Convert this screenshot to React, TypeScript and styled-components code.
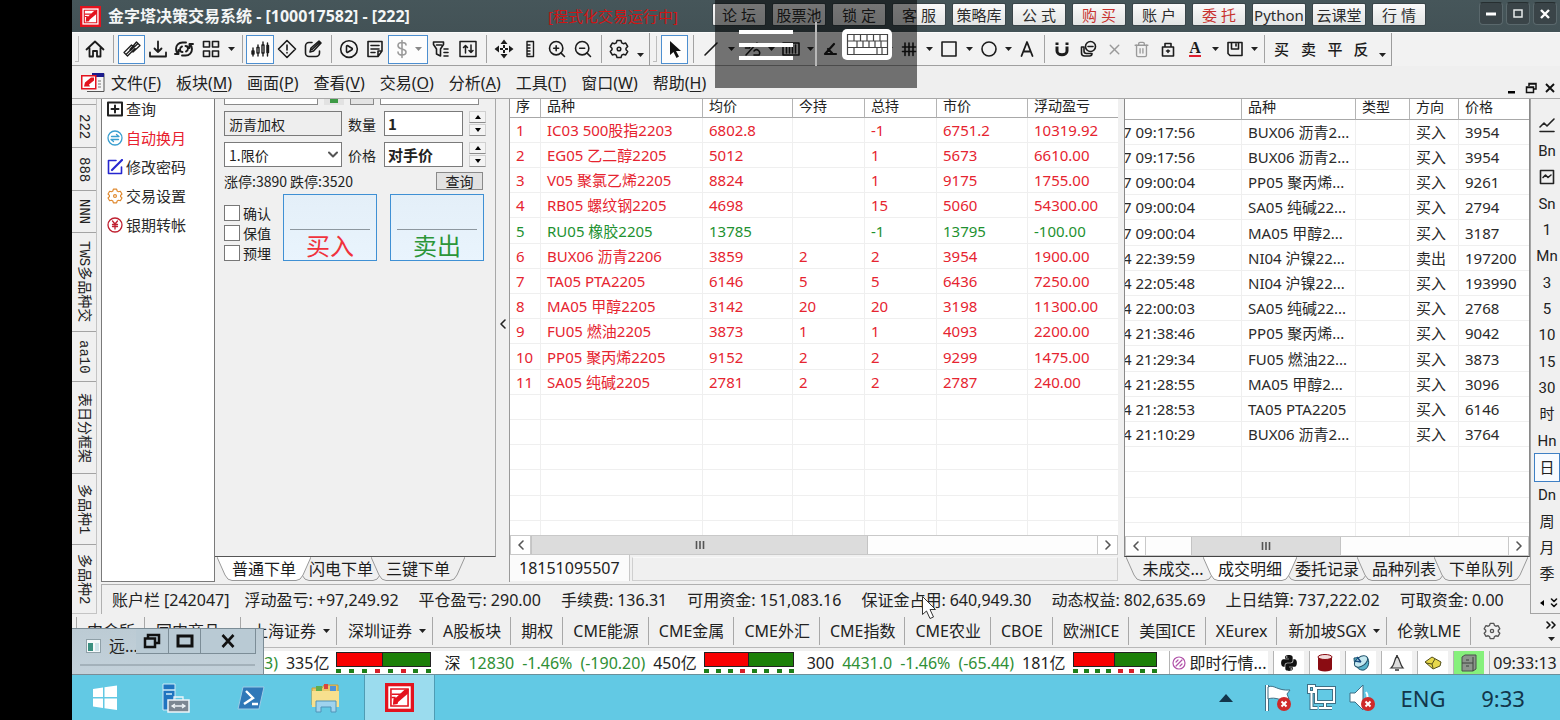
import React from 'react';
import styled, { createGlobalStyle, css } from 'styled-components';
import { CirclePlay, ZoomIn, ZoomOut, Trash2, X } from 'lucide-react';
import { FaPython } from 'react-icons/fa';

const UI_FONT = '"Noto Sans", "Noto Sans CJK SC", sans-serif';
const FORM_FONT = '"Noto Sans CJK SC", sans-serif';

const GlobalStyle = createGlobalStyle`
  * { box-sizing: border-box; }
  html, body { margin: 0; padding: 0; background: #000; }
  body { font-family: ${UI_FONT}; font-size: 16px; line-height: 20px; color: #222; overflow: hidden; }
  button, input, select { font: inherit; color: inherit; margin: 0; padding: 0; border: 0; background: none; border-radius: 0; outline: none; }
  ul { list-style: none; margin: 0; padding: 0; }
  svg { display: block; flex: none; }
`;

/* ---------- shell ---------- */
const Screen = styled.div`
  display: flex;
  height: 100vh;
  background: #000;
`;
const Bezel = styled.div`
  flex: 0 0 72px;
`;
const Desktop = styled.div`
  position: relative;
  flex: 1;
  min-width: 0;
  display: flex;
  flex-direction: column;
  background: #f0f0f0;
  overflow: hidden;
  white-space: nowrap;
`;

/* ---------- title bar ---------- */
const TitleBar = styled.header`
  flex: 0 0 32px;
  display: flex;
  align-items: center;
  padding: 0 3px 0 8px;
  background: linear-gradient(#46565a, #435256);
`;
const Title = styled.h1`
  flex: 0 0 440px;
  margin: 0 0 0 7px;
  font-size: 16px;
  line-height: 20px;
  font-weight: 700;
  color: #f4f6f6;
`;
const Running = styled.span`
  flex: 0 0 165px;
  font-size: 15px;
  color: #d01414;
`;
const TitleLinks = styled.nav`
  display: flex;
  gap: 8px;
  margin-top: -3px;
`;
const TitleLink = styled.button<{ $red?: boolean }>`
  width: 52px;
  height: 21px;
  font-size: 15px;
  line-height: 20px;
  background: linear-gradient(#fafafa, #e2e4e4);
  box-shadow: 0 0 0 1px #394448;
  border-radius: 1px;
  color: ${(p) => (p.$red ? '#c8322e' : '#2c2c2c')};
`;
const WindowButtons = styled.div`
  display: flex;
  gap: 3px;
  margin: -5px 0 0 auto;
`;
const WindowButton = styled.button`
  width: 24px;
  height: 23px;
  display: grid;
  place-items: center;
  background: #3a4448;
  border: 1px solid #5a686c;
  border-top-color: #262e30;
  border-radius: 4px;
`;

/* ---------- toolbars ---------- */
const ToolRow = styled.div`
  flex: 0 0 34px;
  display: flex;
  background: #f2f2f2;
  border-top: 1px solid #fbfbfb;
`;
const ToolGroup = styled.div<{ $lead: number; $tail: number }>`
  display: flex;
  align-items: center;
  padding-right: ${(p) => p.$tail}px;
  border-right: 1px solid #9c9c9c;
  border-bottom: 1px solid #a0a0a0;
  &::before {
    content: '';
    width: 3px;
    height: 25px;
    margin: 0 ${(p) => p.$lead - 6}px 0 3px;
    border: 1px solid #bdbdbd;
    border-width: 0 1px 1px 0;
  }
`;
const Tool = styled.button<{ $w?: number; $on?: boolean; $dim?: boolean }>`
  flex: none;
  width: ${(p) => p.$w ?? 26}px;
  height: 29px;
  display: flex;
  align-items: center;
  justify-content: center;
  gap: 6px;
  font-family: ${FORM_FONT};
  font-weight: 500;
  font-size: 15px;
  line-height: 20px;
  color: ${(p) => (p.$dim ? '#9a9a9a' : '#1c1c1c')};
  ${(p) => p.$on && css`
    && { border: 1px solid #4d8fd0; background: #fdfdfd; }
  `}
`;
const Drop = styled.button<{ $w?: number; $low?: boolean }>`
  flex: none;
  width: ${(p) => p.$w ?? 14}px;
  height: 29px;
  display: flex;
  justify-content: center;
  align-items: center;
  && { padding-top: ${(p) => (p.$low ? 12 : 0)}px; }
`;
const Divider = styled.i<{ $w?: number }>`
  flex: none;
  width: ${(p) => p.$w ?? 10}px;
  height: 28px;
  display: flex;
  justify-content: center;
  &::before { content: ''; width: 1px; background: #a2a2a2; }
`;

const MenuRow = styled.div`
  flex: 0 0 32px;
  display: flex;
  align-items: center;
  gap: 15px;
  padding: 2px 1px 0 9px;
  background: #efefef;
`;
const MenuButton = styled.button`
  line-height: 20px;
  font-size: 16px;
  & u { text-underline-offset: 2px; }
`;
const MdiButtons = styled.div`
  margin-left: auto;
  align-self: flex-end;
  display: flex;
`;
const MdiButton = styled.button`
  width: 19px;
  height: 20px;
  display: grid;
  place-items: center;
`;

/* ---------- work area ---------- */
const WorkArea = styled.main`
  flex: 1;
  min-height: 0;
  display: flex;
  border-top: 1px solid #a8a8a8;
`;
const BoardRail = styled.nav`
  flex: 0 0 25px;
  display: flex;
  flex-direction: column;
  padding-top: 5px;
  border: 1px solid #c4c4c4;
  border-width: 0 1px 1px 0;
`;
const BoardTab = styled.button<{ $grow: number }>`
  flex: ${(p) => p.$grow} 1 0;
  min-height: 0;
  && { border-top: 1px solid #a4a4a4; }
  writing-mode: vertical-rl;
  text-orientation: sideways;
  font-family: "Liberation Mono", "Noto Sans CJK SC", monospace;
  font-size: 14px;
  line-height: 20px;
  text-align: center;
`;
const Centre = styled.div`
  flex: 1;
  min-width: 0;
  display: flex;
  flex-direction: column;
`;
const Workspace = styled.div`
  flex: 1;
  min-height: 0;
  display: flex;
  padding: 0 0 2px 4px;
`;
const SideMenu = styled.ul`
  flex: 0 0 114px;
  && { padding: 0 0 0 5px; }
  background: #fff;
  border: 1px solid #7a7a7a;
  border-top: 0;
  display: flex;
  flex-direction: column;
  gap: 9px;
`;
const SideItem = styled.button<{ $red?: boolean }>`
  display: flex;
  align-items: center;
  gap: 3px;
  height: 20px;
  font-size: 15px;
  line-height: 20px;
  color: ${(p) => (p.$red ? '#e8202e' : '#2a2a2a')};
`;

const OrderPane = styled.section`
  flex: 0 0 281px;
  display: flex;
  flex-direction: column;
`;
const OrderForm = styled.form`
  flex: 1;
  min-height: 0;
  overflow: hidden;
  padding-left: 9px;
  border-right: 1px solid #a8a8a8;
  border-bottom: 1px solid #555;
  font-family: ${FORM_FONT};
  font-size: 14px;
  line-height: 18px;
`;
const FormTop = styled.div`
  display: grid;
  grid-template-columns: 94px 20px 24px 99px;
  column-gap: 6px;
  height: 6px;
  & > * { border: 1px solid #8a8a8a; border-top: 0; background: #fff; }
  & > :nth-child(2) { background: #3d9a45; border: 2px solid #e2e2e2; border-width: 0 6px 2px; }
  & > :nth-child(3) { background: #e4e4e4; }
`;
const FormRow = styled.div`
  display: grid;
  grid-template-columns: 118px 30px 79px 17px;
  column-gap: 6px;
  align-items: center;
  margin-top: 6px;
`;
const Field = styled.input<{ $bold?: boolean }>`
  width: 100%;
  min-width: 0;
  height: 25px;
  && { padding: 0 4px; border: 1px solid #7a7a7a; background: #fff; }
  &&:read-only { background: #eee; }
  ${(p) => p.$bold && css`&& { font-weight: 700; font-size: 15px; padding: 0 3px; }`}
`;
const PriceKind = styled.div`
  position: relative;
  & select {
    width: 100%;
    height: 25px;
    appearance: none;
    padding: 0 4px;
    border: 1px solid #7a7a7a;
    background: #fff;
  }
  & svg { position: absolute; right: 4px; top: 9px; pointer-events: none; }
`;
const Spinner = styled.div`
  display: grid;
  gap: 1px;
  & button {
    height: 12px;
    display: grid;
    place-items: center;
    border: 1px solid #d0d0d0;
    border-bottom-color: #8c8c8c;
    background: #f4f4f4;
  }
`;
const LimitRow = styled.div`
  display: flex;
  align-items: center;
  justify-content: space-between;
  width: 259px;
  margin-top: 5px;
  & button {
    width: 47px;
    height: 18px;
    line-height: 16px;
    border: 1px solid #8a8a8a;
    background: #e2e2e2;
  }
`;
const TradeRow = styled.div`
  display: grid;
  grid-template-columns: 46px 94px 94px;
  column-gap: 13px;
  margin-top: 4px;
`;
const Checks = styled.div`
  display: grid;
  gap: 2px;
  padding-top: 10px;
  & label { display: flex; align-items: center; gap: 3px; height: 18px; }
  & input {
    flex: none;
    appearance: none;
    width: 16px;
    height: 16px;
    border: 1px solid #777;
    background: #fff;
  }
`;
const TradeButton = styled.button<{ $tone: string }>`
  && { padding: 0 6px; border: 1px solid #3f90d4; background: linear-gradient(#e4eff8, #e9f4fd); }
  height: 67px;
  font-size: 24px;
  line-height: 30px;
  color: ${(p) => p.$tone};
  &::before {
    content: '';
    display: block;
    height: 33px;
    border-bottom: 1px solid #8d979f;
  }
`;

const SheetTabs = styled.div`
  flex: 0 0 25px;
  display: flex;
  align-items: flex-start;
  padding-left: 2px;
`;
const SheetTab = styled.button<{ $on?: boolean }>`
  position: relative;
  z-index: ${(p) => (p.$on ? 1 : 0)};
  display: flex;
  height: 24px;
  && { margin-right: -17px; }
  color: #1c1c1c;
  & span {
    min-width: 64px;
    height: 24px;
    line-height: 24px;
    border-bottom: 1px solid #999;
    background: ${(p) => (p.$on ? '#fff' : '#f0f0f0')};
  }
  & path:first-child { fill: ${(p) => (p.$on ? '#fff' : '#f0f0f0')}; }
`;

const Splitter = styled.button`
  flex: 0 0 14px;
  display: grid;
  place-items: center;
  && { padding-bottom: 34px; border-right: 1px solid #9a9a9a; }
`;
const ListPane = styled.section<{ $share: number }>`
  flex: ${(p) => p.$share} 1 0;
  min-width: 0;
  display: flex;
  flex-direction: column;
`;
const ListBody = styled.div<{ $framed?: boolean }>`
  flex: 1;
  min-height: 0;
  display: flex;
  flex-direction: column;
  background: #fff;
  ${(p) => p.$framed && css`
    border: 1px solid #8a8a8a;
    border-top: 0;
    border-bottom-color: #444;
  `}
`;
const TableClip = styled.div`
  flex: 1;
  min-height: 0;
  overflow: hidden;
`;
const Table = styled.table<{ $head: number }>`
  width: 100%;
  table-layout: fixed;
  border-collapse: separate;
  border-spacing: 0;
  font-size: 15px;
  & th {
    height: ${(p) => p.$head}px;
    padding: 0 0 4px 6px;
    font-size: 14px;
    font-weight: 400;
    line-height: ${(p) => p.$head - 5}px;
    text-align: left;
    border-right: 1px solid #b4b4b4;
    border-bottom: 1px solid #a8a8a8;
  }
  & td {
    height: 25px;
    padding: 0 0 0 6px;
    line-height: 20px;
    overflow: hidden;
    border-right: 1px solid #efefef;
    border-bottom: 1px solid #efefef;
  }
  & tr:nth-child(5n) td { height: 26px; }
  & th:last-child, & td:last-child { border-right: 0; }
`;
const Row = styled.tr<{ $tone: string }>`
  color: ${(p) => p.$tone};
`;
const ScrollBar = styled.div`
  flex: 0 0 20px;
  display: flex;
  border: 1px solid #c9c9c9;
  background: #fdfdfd;
  color: #555;
  & > button {
    flex: 0 0 20px;
    display: grid;
    place-items: center;
    background: #fff;
    border: 0 solid #c9c9c9;
  }
  & > button:first-child { border-right-width: 1px; }
  & > button:last-child { border-left-width: 1px; }
`;
const Track = styled.div<{ $before: number; $thumb: number; $after: number }>`
  flex: 1;
  display: grid;
  grid-template-columns: ${(p) => p.$before}fr ${(p) => p.$thumb}fr ${(p) => p.$after}fr;
  & > div {
    grid-column: 2;
    display: grid;
    place-items: center;
    background: #dcdcdc;
    border: 1px solid #c4c4c4;
    border-width: 0 1px;
  }
`;
const AccountTabs = styled.div`
  flex: 0 0 27px;
  display: flex;
  gap: 2px;
  padding-bottom: 1px;
  & button { background: #fbfbfb; padding: 0 9px; border-right: 1px solid #c8c8c8; }
  & div { flex: 1; margin-top: 2px; border: 1px solid #cfcfcf; border-top-color: #f8f8f8; }
`;
const Gutter = styled.div`
  flex: 0 0 6px;
`;

const AccountBar = styled.dl`
  flex: 0 0 30px;
  display: flex;
  align-items: center;
  gap: 20px;
  margin: 0 0 0 4px;
  padding: 0 0 0 10px;
  border: 1px solid #b0b0b0;
  border-width: 1px 0 0 1px;
  overflow: hidden;
  & div { display: flex; gap: 4px; }
  & div:first-child { margin-right: -5px; }
  & dt, & dd { margin: 0; }
`;

const PeriodRail = styled.nav`
  flex: 0 0 30px;
  display: flex;
  flex-direction: column;
  padding: 12px 0 0 3px;
  border: 1px solid #a4a4a4;
  border-width: 0 0 1px 1px;
`;
const PeriodButton = styled.button<{ $on?: boolean }>`
  flex: 1;
  min-height: 0;
  display: grid;
  place-items: center;
  font-family: "Roboto", "Noto Sans CJK SC", sans-serif;
  font-size: 15px;
  line-height: 18px;
  && { padding-top: 1px; }
  ${(p) => p.$on && css`
    && { border: 1px solid #3f80c4; background: #f8fbff; }
  `}
`;
const RailMore = styled.div`
  flex: 0 0 26px;
  display: flex;
  align-items: center;
  justify-content: flex-end;
  gap: 6px;
  padding: 6px 2px 0 0;
`;

/* ---------- markets ---------- */
const MarketRow = styled.nav`
  flex: 0 0 34px;
  display: flex;
  padding: 3px 4px 2px;
  border-bottom: 1px solid #b8b8b8;
`;
const Market = styled.button<{ $menu?: boolean }>`
  flex: none;
  display: flex;
  align-items: center;
  gap: 7px;
  && {
    padding: ${(p) => (p.$menu ? '0 6px 0 11px' : '0 9px 0 10px')};
    border-left: 1px solid #a8a8a8;
  }
`;
const MarketMore = styled.div`
  display: grid;
  align-content: space-around;
  justify-items: center;
  margin-left: auto;
`;

/* ---------- status bar ---------- */
const StatusRow = styled.footer`
  flex: 0 0 27px;
  display: flex;
  align-items: center;
  gap: 7px;
  padding-left: 192px;
  background: #fff;
  border-top: 3px solid #f0f0f0;
  border-bottom: 1px solid #6b8f9a;
`;
const Quote = styled.div`
  flex: none;
  display: flex;
  gap: 8px;
  &:not(:first-child) { margin-left: 6px; }
  & b { font-weight: 400; color: #2f8f35; }
`;
const Strength = styled.div<{ $w: number }>`
  flex: none;
  width: ${(p) => p.$w}px;
  & > div {
    display: flex;
    height: 15px;
    background: #1c8008;
    border: 1px solid #222;
  }
  & > div i { background: #f80000; border-right: 1px solid #222; }
`;
const Dots = styled.ul`
  display: flex;
  justify-content: space-between;
  && { margin-top: 2px; }
`;
const Dot = styled.li<{ $up: boolean }>`
  width: 5px;
  height: 4px;
  background: ${(p) => (p.$up ? '#d8202a' : '#1f7f1a')};
`;
const StatusTray = styled.div`
  margin-left: auto;
  display: flex;
  align-self: stretch;
  background: #f0f0f0;
  gap: 5px;
`;
const TrayCell = styled.button<{ $w: number; $bg?: string }>`
  width: ${(p) => p.$w}px;
  display: flex;
  align-items: center;
  justify-content: center;
  gap: 4px;
  && { background: ${(p) => p.$bg ?? '#fff'}; border-left: 1px solid #b4b4b4; }
`;

/* ---------- Windows taskbar ---------- */
const TaskBar = styled.footer`
  flex: 0 0 45px;
  display: flex;
  align-items: center;
  background: #62c9e4;
  color: #12354b;
`;
const Task = styled.button<{ $w: number; $on?: boolean }>`
  width: ${(p) => p.$w}px;
  height: 45px;
  display: grid;
  place-items: center;
  ${(p) => p.$on && css`
    && { background: #9bdcee; border: 1px solid #4f9cb4; border-width: 0 1px; }
  `}
`;
const Tray = styled.div`
  margin-left: auto;
  display: flex;
  align-items: center;
  padding-right: 14px;
  font-size: 22px;
  line-height: 28px;
`;
const TrayText = styled.span<{ $w: number }>`
  width: ${(p) => p.$w}px;
  text-align: center;
`;
const TrayIcons = styled.span`
  display: flex;
  gap: 12px;
  padding: 0 8px 0 31px;
`;

/* ---------- floating layers ---------- */
const PhoneOverlay = styled.div`
  position: absolute;
  z-index: 5;
  top: 0;
  left: 50%;
  width: 202px;
  height: 88px;
  margin-left: -101px;
  display: flex;
  background: rgba(0, 0, 0, 0.53);
`;
const OverlayHalf = styled.button`
  flex: 1;
  display: grid;
  place-items: center;
  &:first-child::after {
    content: '';
    position: absolute;
    left: 100px;
    top: 22px;
    width: 2px;
    height: 44px;
    background: #b8b8b8;
  }
`;
const Burger = styled.span`
  width: 54px;
  display: grid;
  gap: 9px;
  padding-top: 2px;
  & i { height: 4px; background: #fff; }
`;
const MiniWindow = styled.div`
  position: absolute;
  z-index: 4;
  left: 0;
  bottom: 45px;
  width: 192px;
  height: 47px;
  display: flex;
  align-items: flex-start;
  padding: 0 7px 0 14px;
  background: linear-gradient(#bccbd4, #c3d1da);
  border: 1px solid #7b8c96;
  border-left: 0;
  &::after {
    content: '';
    position: absolute;
    left: 8px;
    right: 8px;
    bottom: 8px;
    height: 2px;
    background: #a3b1ba;
  }
`;
const MiniIcon = styled.span`
  margin-top: 10px;
`;
const MiniTitle = styled.span`
  width: 28px;
  margin: 7px 0 0 8px;
  overflow: hidden;
`;
const MiniButton = styled.button<{ $w: number }>`
  flex: none;
  width: ${(p) => p.$w}px;
  height: 25px;
  display: grid;
  place-items: center;
  && { background: #b9cad4; border: 1px solid #7c8d97; border-top: 0; border-left-width: 0; }
`;
const Pointer = styled.svg`
  position: absolute;
  z-index: 4;
  left: 849px;
  top: 595px;
`;
const MenuMark = styled.span`
  width: 24px;
  margin-right: -9px;
`;
const MarketGear = styled.span`
  padding-left: 2px;
  color: #555;
`;
const FontColour = styled.span`
  width: 12px;
  height: 16px;
  font: 700 16px/14px "Liberation Serif", serif;
  border-bottom: 2px solid #e02030;
`;

/* ---------- drawings ---------- */
type P = { children: React.ReactNode; w?: number; h?: number; sw?: number };
const G = ({ children, w = 20, h = 20, sw = 1.6 }: P) => (
  <svg width={w} height={h} viewBox={`0 0 ${w} ${h}`} fill="none" stroke="currentColor" strokeWidth={sw} strokeLinejoin="round" strokeLinecap="round">
    {children}
  </svg>
);
const Caret = ({ c = '#222' }: { c?: string }) => (
  <svg width="7" height="4" viewBox="0 0 7 4"><path d="M0 0h7L3.5 4z" fill={c} /></svg>
);
const Chevron = ({ right }: { right?: boolean }) => (
  <G w={8} h={12} sw={1.6}><path d={right ? 'M2 2l4 4-4 4' : 'M6 2L2 6l4 4'} /></G>
);
const Logo = ({ size }: { size: number }) => (
  <svg width={size} height={size} viewBox="0 0 22 22">
    <rect width="22" height="22" fill="#e3131e" />
    <rect x="2.500" y="2.500" width="17" height="17" fill="#fff" />
    <path d="M4.500 4.500h13v13h-13z" fill="none" stroke="#e3131e" strokeWidth="1.200" />
    <path d="M6 16.500l.5-5 2-.5L15 5l3-.5-.5 3.500-7.500 6.500-.5 1.500z" fill="#e3131e" />
    <path d="M5 8.500h7M5 11h3" stroke="#e3131e" strokeWidth="1.200" />
  </svg>
);
const EdgeL = () => (
  <svg width="15" height="24" viewBox="0 0 15 24">
    <path d="M0 0L8 18Q10.500 23.500 15 23.500V0z" />
    <path d="M0 0L8 18Q10.500 23.500 15 23.500" fill="none" stroke="#999" />
  </svg>
);
const EdgeR = () => (
  <svg width="15" height="24" viewBox="0 0 15 24">
    <path d="M15 0L7 18Q4.500 23.500 0 23.500V0z" />
    <path d="M15 0L7 18Q4.500 23.500 0 23.500" fill="none" stroke="#999" />
  </svg>
);
const Gear = ({ size = 20, c = 'currentColor' }: { size?: number; c?: string }) => (
  <svg width={size} height={size} viewBox="0 0 20 20" fill="none" stroke={c} strokeWidth="1.500" strokeLinejoin="round">
    <path d="M8 1.500h4l.7 2.300 1.600.9 2.400-.6 2 3.400L17 9.200v1.600l1.700 1.700-2 3.400-2.400-.6-1.600.9-.7 2.300H8l-.7-2.300-1.600-.9-2.400.6-2-3.400L3 10.800V9.200L1.300 7.500l2-3.400 2.400.6 1.600-.9z" />
    <circle cx="10" cy="10" r="1.800" />
  </svg>
);
const ErrorBadge = () => (
  <g>
    <circle cx="20" cy="21" r="7" fill="#cf2a2a" />
    <path d="M17.500 18.500l5 5m0-5l-5 5" stroke="#fff" strokeWidth="2" />
  </g>
);

/* ---------- data ---------- */
const titleLinks: [string, boolean?][] = [
  ['论 坛'], ['股票池'], ['锁 定'], ['客 服'], ['策略库'], ['公 式'], ['购 买', true],
  ['账 户'], ['委 托', true], ['Python'], ['云课堂'], ['行 情'],
];
const menus = [
  ['文件', 'F'], ['板块', 'M'], ['画面', 'P'], ['查看', 'V'], ['交易', 'O'],
  ['分析', 'A'], ['工具', 'T'], ['窗口', 'W'], ['帮助', 'H'],
];
const boards: [string, number][] = [
  ['222', 43], ['888', 42], ['NNN', 42], ['TWS多品种交', 99], ['aa10', 50],
  ['表日分框架', 92], ['多品种1', 71], ['多品种2', 69],
];
const positions = [
  ['1', 'IC03 500股指2203', '6802.8', '', '-1', '6751.2', '10319.92'],
  ['2', 'EG05 乙二醇2205', '5012', '', '1', '5673', '6610.00'],
  ['3', 'V05 聚氯乙烯2205', '8824', '', '1', '9175', '1755.00'],
  ['4', 'RB05 螺纹钢2205', '4698', '', '15', '5060', '54300.00'],
  ['5', 'RU05 橡胶2205', '13785', '', '-1', '13795', '-100.00'],
  ['6', 'BUX06 沥青2206', '3859', '2', '2', '3954', '1900.00'],
  ['7', 'TA05 PTA2205', '6146', '5', '5', '6436', '7250.00'],
  ['8', 'MA05 甲醇2205', '3142', '20', '20', '3198', '11300.00'],
  ['9', 'FU05 燃油2205', '3873', '1', '1', '4093', '2200.00'],
  ['10', 'PP05 聚丙烯2205', '9152', '2', '2', '9299', '1475.00'],
  ['11', 'SA05 纯碱2205', '2781', '2', '2', '2787', '240.00'],
];
const fills = [
  ['7 09:17:56', 'BUX06 沥青2...', '', '买入', '3954'],
  ['7 09:17:56', 'BUX06 沥青2...', '', '买入', '3954'],
  ['7 09:00:04', 'PP05 聚丙烯...', '', '买入', '9261'],
  ['7 09:00:04', 'SA05 纯碱22...', '', '买入', '2794'],
  ['7 09:00:04', 'MA05 甲醇2...', '', '买入', '3187'],
  ['4 22:39:59', 'NI04 沪镍22...', '', '卖出', '197200'],
  ['4 22:05:48', 'NI04 沪镍22...', '', '买入', '193990'],
  ['4 22:00:03', 'SA05 纯碱22...', '', '买入', '2768'],
  ['4 21:38:46', 'PP05 聚丙烯...', '', '买入', '9042'],
  ['4 21:29:34', 'FU05 燃油22...', '', '买入', '3873'],
  ['4 21:28:55', 'MA05 甲醇2...', '', '买入', '3096'],
  ['4 21:28:53', 'TA05 PTA2205', '', '买入', '6146'],
  ['4 21:10:29', 'BUX06 沥青2...', '', '买入', '3764'],
];
const account = [
  ['浮动盈亏:', '+97,249.92'], ['平仓盈亏:', '290.00'], ['手续费:', '136.31'],
  ['可用资金:', '151,083.16'], ['保证金占用:', '640,949.30'], ['动态权益:', '802,635.69'],
  ['上日结算:', '737,222.02'], ['可取资金:', '0.00'],
];
const markets: [string, boolean?][] = [
  ['中金所'], ['国内商品', true], ['上海证券', true], ['深圳证券', true], ['A股板块'], ['期权'],
  ['CME能源'], ['CME金属'], ['CME外汇'], ['CME指数'], ['CME农业'], ['CBOE'], ['欧洲ICE'],
  ['美国ICE'], ['XEurex'], ['新加坡SGX', true], ['伦敦LME'],
];
const ROWS_SHOWN = 17;

const FlushCell = styled.td`
  text-indent: -2px;
  && { padding-left: 0; }
`;
const Grid = ({ heads, widths, rows, headHeight, tone, flushFirst }: {
  heads: string[]; widths: (number | undefined)[]; rows: string[][]; headHeight: number;
  tone: (r: string[]) => string; flushFirst?: boolean;
}) => (
  <Table $head={headHeight}>
    <colgroup>{widths.map((w, i) => <col key={i} width={w} />)}</colgroup>
    <thead><tr>{heads.map((h, i) => <th key={i}>{h}</th>)}</tr></thead>
    <tbody>
      {Array.from({ length: ROWS_SHOWN }, (_, r) => rows[r] ?? heads.map(() => '')).map((r, i) => (
        <Row key={i} $tone={tone(r)}>
          {r.map((c, j) => (flushFirst && j === 0 ? <FlushCell key={j}>{c}</FlushCell> : <td key={j}>{c}</td>))}
        </Row>
      ))}
    </tbody>
  </Table>
);

const Scroll = (p: { before: number; thumb: number; after: number }) => (
  <ScrollBar>
    <button aria-label="向左滚动"><Chevron /></button>
    <Track $before={p.before} $thumb={p.thumb} $after={p.after}>
      <div><G w={10} h={8}><path d="M1.500 0v8M5 0v8M8.500 0v8" /></G></div>
    </Track>
    <button aria-label="向右滚动"><Chevron right /></button>
  </ScrollBar>
);

const Sheets = ({ names, active }: { names: string[]; active: number }) => (
  <SheetTabs>
    {names.map((n, i) => (
      <SheetTab key={n} $on={i === active}><EdgeL /><span>{n}</span><EdgeR /></SheetTab>
    ))}
  </SheetTabs>
);

const StrengthBar = ({ w, up, dots }: { w: number; up: number; dots: string }) => (
  <Strength $w={w}>
    <div><i style={{ width: `${up}%` }} /></div>
    <Dots>{dots.split('').map((d, i) => <Dot key={i} $up={d === 'r'} />)}</Dots>
  </Strength>
);

const Spin = () => (
  <Spinner>
    <button type="button" aria-label="增加"><svg width="6" height="4" viewBox="0 0 6 4"><path d="M0 4h6L3 0z" /></svg></button>
    <button type="button" aria-label="减少"><svg width="6" height="4" viewBox="0 0 6 4"><path d="M0 0h6L3 4z" /></svg></button>
  </Spinner>
);

const MainTools = () => (
  <ToolGroup $lead={9} $tail={1}>
    <Tool aria-label="首页"><G sw={1.8}><path d="M1.500 10.500L10 2.500l8.500 8M4.500 9v8.500h3.500V12h4v5.500h3.500V9" /></G></Tool>
    <Divider />
    <Tool $w={27} $on aria-label="连接">
      <G sw={1.3}><path d="M2 13.500L9.500 6l3.500 3.500L5.500 17zM8 10.500L14.500 3 18 6.500 11 13M4.500 15l8-8M8.500 11.500l7.500-7" /></G>
    </Tool>
    <Tool aria-label="下载"><G sw={1.8}><path d="M10 2.500v10.500M6.500 9.500L10 13l3.500-3.500M2 13.500v4h16v-4" /></G></Tool>
    <Tool aria-label="刷新">
      <G sw={1.9}><path d="M8.500 3.500C4.500 3.500 2 6.500 2 10c0 2 .8 3.500 2 4.500M4.500 11v4H1M8 7.500c-1.500.5-2 1.500-2 3s1 2.500 2.500 2.500M11.500 16.500c4 0 6.500-3 6.500-6.500 0-2-.8-3.500-2-4.500M15.500 9V5H19M12 12.500c1.500-.5 2-1.500 2-3S13 7 11.500 7M8 3.500h4M8 16.500h4" /></G>
    </Tool>
    <Tool $w={27} aria-label="布局"><G><path d="M2.500 2.500h6V8h-6zM11.500 2.500h6V8h-6zM2.500 12h6v5.500h-6zM11.500 12h6v5.500h-6z" /></G></Tool>
    <Drop aria-label="布局选项"><Caret /></Drop>
    <Divider $w={8} />
    <Tool $w={28} $on aria-label="K线">
      <G w={20} sw={1.4}><path d="M3 9v8M8 6v11M13 3v14M17.500 4v13" /><path d="M2 12h2v3H2zM17 6.500h1.500v7H17z" fill="currentColor" /><path d="M7 8.500h2V14H7zM12 6h2v8h-2z" fill="#fff" /></G>
    </Tool>
    <Tool aria-label="预警"><G><path d="M10 1.500L18.500 10 10 18.500 1.500 10zM10 6v5M10 13.500v.5" /></G></Tool>
    <Tool aria-label="编辑"><G><path d="M9 3.500H6A3.500 3.500 0 0 0 2.500 7v7A3.500 3.500 0 0 0 6 17.500h7a3.500 3.500 0 0 0 3.500-3.500v-2M7 13l1-4 8-7 2 2-7.500 8zM9 10.500L16.500 3.500" /></G></Tool>
    <Divider />
    <Tool aria-label="运行"><CirclePlay size={20} strokeWidth={1.9} /></Tool>
    <Tool aria-label="公告"><G><path d="M3 2.500h14V12l-4 5.500H3zM6 6.500h8M6 10h8M17 12h-4v5M6 13.500h4" /></G></Tool>
    <Tool $w={40} $on $dim aria-label="资金">
      <G w={14}><path d="M11 6c0-2-2-2.500-4-2.500S3 4.500 3 6.500 5 9.500 7 10s4 1 4 3-2 3-4 3-4-1-4-3M7 1.500v17" /></G>
      <Caret c="#888" />
    </Tool>
    <Tool aria-label="筛选"><G><path d="M2.500 3h10v2.500L9.500 10v7l-4-2v-5l-3-4.500zM5.500 6h5M13 10h4M13 13.500h4M13 17h4" /></G></Tool>
    <Tool $w={27} aria-label="排序"><G sw={1.5}><path d="M2 2.500h16v15H2zM7.500 14V6.500M5.500 8.500l2-2 2 2M13 6v7.500M11 11.500l2 2 2-2" /></G></Tool>
    <Divider />
    <Tool aria-label="移动"><G><path d="M10 .5l3.500 4.500h-7zM10 19.500l3.500-4.500h-7zM.5 10L5 6.500v7zM19.500 10L15 6.500v7zM9 6h2v3H9zM9 11h2v3H9zM6 9h3v2H6zM11 9h3v2h-3z" fill="currentColor" stroke="none" /></G></Tool>
    <Tool aria-label="标尺"><G sw={1.4}><path d="M7 2.500h6.500v15H7zM7 6h3M7 9h3M7 12h3M7 15h3" /></G></Tool>
    <Tool $w={27} aria-label="放大"><ZoomIn size={20} strokeWidth={1.9} /></Tool>
    <Tool aria-label="缩小"><ZoomOut size={20} strokeWidth={1.9} /></Tool>
    <Divider />
    <Tool aria-label="设置"><Gear /></Tool>
    <Drop $w={16} $low aria-label="更多"><Caret /></Drop>
  </ToolGroup>
);

const DrawTools = () => (
  <ToolGroup $lead={10} $tail={1}>
    <Tool $w={27} $on aria-label="选择"><svg width="16" height="20" viewBox="0 0 16 20"><path d="M3 2v14l3.500-3 3 6 2.500-1.500-3-5.500h5z" fill="#111" /></svg></Tool>
    <Divider />
    <Tool aria-label="直线"><G><path d="M4 16L16 4" /></G></Tool>
    <Drop aria-label="直线选项"><Caret /></Drop>
    <Tool $w={27} aria-label="百分比"><G><path d="M4 16L15 4M3 5h5M12 16h5a2.500 2.500 0 0 0-5-4M3.500 9h4a2 2 0 0 0-1-3" /></G></Tool>
    <Drop $w={12} aria-label="百分比选项"><Caret /></Drop>
    <Tool $w={27} aria-label="周期线"><G><path d="M2 4h16v12H2zM5.500 6v8M8.500 6v8M11.500 6v8M14.500 6v8" /></G></Tool>
    <Drop $w={13} aria-label="周期线选项"><Caret /></Drop>
    <Tool aria-label="角度"><G sw={2.2}><path d="M14 5L5 15h11M8 10l4 4" /></G></Tool>
    <Tool $w={40} aria-label="标注" />
    <Drop $w={13} aria-label="标注选项"><Caret /></Drop>
    <Tool aria-label="网格"><G><path d="M6 4v12.500M10 4v12.500M14 4v12.500M3.500 8h13M3.500 12.500h13" /></G></Tool>
    <Drop aria-label="网格选项"><Caret /></Drop>
    <Tool aria-label="矩形"><G><path d="M3 3h14v14H3z" /></G></Tool>
    <Drop aria-label="矩形选项"><Caret /></Drop>
    <Tool aria-label="圆形"><G><circle cx="10" cy="10" r="7" /></G></Tool>
    <Drop $w={12} aria-label="圆形选项"><Caret /></Drop>
    <Tool aria-label="文字"><G sw={1.8}><path d="M4.500 17L10 3l5.500 14M6.500 12.500h7" /></G></Tool>
    <Divider $w={9} />
    <Tool aria-label="磁吸"><G sw={3}><path d="M5 7.500V12c0 5 10 5 10 0V7.500M5 3.500V6M15 3.500V6" strokeLinecap="butt" /></G></Tool>
    <Tool aria-label="复制"><G><circle cx="12.500" cy="7.500" r="5" /><path d="M6 8H3.500v6a3 3 0 0 0 3 3h5c1.500 0 2.500-1 2.500-2.500M10 7.500h5M6 8v4c0 1.500 1 2.500 2.500 2.500H14" /></G></Tool>
    <Tool $dim aria-label="删除"><X size={17} strokeWidth={2} /></Tool>
    <Tool $w={28} $dim aria-label="清空"><Trash2 size={17} strokeWidth={1.9} /></Tool>
    <Tool aria-label="锁定"><G><path d="M4.500 8h11v9h-11zM7 8V4.500h6V8M10 11v2.500M8.500 12h3" /></G></Tool>
    <Tool $w={28} aria-label="文字颜色"><FontColour>A</FontColour></Tool>
    <Drop $w={13} aria-label="颜色选项"><Caret /></Drop>
    <Tool aria-label="保存"><G><path d="M3 3.500h14v13H5L3 14.500zM6.500 3.500V10h7V3.500M11 5v2" /></G></Tool>
    <Drop $w={12} aria-label="保存选项"><Caret /></Drop>
    <Divider $w={8} />
    <Tool $w={27}>买</Tool>
    <Tool $w={27}>卖</Tool>
    <Tool>平</Tool>
    <Tool>反</Tool>
    <Drop $w={16} $low aria-label="更多"><Caret /></Drop>
  </ToolGroup>
);

export default function App() {
  return (
    <>
      <GlobalStyle />
      <Screen>
        <Bezel />
        <Desktop>
          <TitleBar>
            <Logo size={21} />
            <Title>金字塔决策交易系统 - [100017582] - [222]</Title>
            <Running>[程式化交易运行中]</Running>
            <TitleLinks>
              {titleLinks.map(([t, red]) => <TitleLink key={t} $red={red}>{t}</TitleLink>)}
            </TitleLinks>
            <WindowButtons>
              <WindowButton aria-label="最小化"><svg width="12" height="12"><path d="M1 4.500h10v3H1z" fill="#fff" /></svg></WindowButton>
              <WindowButton aria-label="最大化"><svg width="12" height="12"><path d="M2 2h8v7H2z" fill="none" stroke="#e8eaea" strokeWidth="1.500" /></svg></WindowButton>
              <WindowButton aria-label="关闭"><svg width="12" height="12"><path d="M2 2l8 8m0-8l-8 8" stroke="#fff" strokeWidth="2.400" /></svg></WindowButton>
            </WindowButtons>
          </TitleBar>

          <ToolRow>
            <MainTools />
            <DrawTools />
          </ToolRow>

          <MenuRow>
            <MenuMark>
              <svg width="24" height="20" viewBox="0 0 24 20">
                <path d="M11 .5h12v18H6" fill="#f4f4f4" stroke="#555" />
                <path d="M11 0h12v4H11z" fill="#1c1c8c" />
                <path d="M17 8h3M17 11h3M17 14h3" stroke="#777" />
                <rect x=".75" y="2.750" width="14" height="13" fill="#fff" stroke="#e3131e" strokeWidth="1.500" />
                <path d="M3 13.500l1-4 6-5h3v3l-5 4 1 2z" fill="#e3131e" />
              </svg>
            </MenuMark>
            {menus.map(([t, k]) => <MenuButton key={k}>{t}(<u>{k}</u>)</MenuButton>)}
            <MdiButtons>
              <MdiButton aria-label="最小化子窗口"><svg width="12" height="12"><path d="M2 9h7v2.500H2z" /></svg></MdiButton>
              <MdiButton aria-label="还原子窗口"><svg width="12" height="12"><path d="M4 4V1.500h7V7H8.500M1.500 5h7v5.500h-7zM4 2h7M1.500 5.500h7" fill="none" stroke="#111" strokeWidth="1.500" /></svg></MdiButton>
              <MdiButton aria-label="关闭子窗口"><svg width="12" height="12"><path d="M2 2l8 8m0-8l-8 8" stroke="#111" strokeWidth="1.900" /></svg></MdiButton>
            </MdiButtons>
          </MenuRow>

          <WorkArea>
            <BoardRail>
              {boards.map(([t, g]) => <BoardTab key={t} $grow={g}>{t}</BoardTab>)}
            </BoardRail>

            <Centre>
              <Workspace>
                <SideMenu>
                  <li><SideItem><G w={16} h={16}><path d="M1 1.500h14v13H1zM8 4.500v7M4.500 8h7" stroke="#222" strokeWidth="2" /></G>查询</SideItem></li>
                  <li><SideItem $red><G w={16} h={16} sw={1.3}><g stroke="#3a9fd0"><circle cx="8" cy="8" r="7" /><path d="M4.500 6.500H12L9.500 4.500M11.500 9.500H4L6.500 11.500" /></g></G>自动换月</SideItem></li>
                  <li><SideItem><G w={16} h={16}><g stroke="#2626d0"><path d="M9 1.500H1.500v13h13V8" /><path d="M5 11L15 1" strokeWidth="2.200" /></g></G>修改密码</SideItem></li>
                  <li><SideItem><Gear size={16} c="#e08a30" />交易设置</SideItem></li>
                  <li><SideItem><G w={16} h={16} sw={1.3}><g stroke="#c02030"><circle cx="8" cy="8" r="7" /><path d="M5.500 4L8 7 10.500 4M8 7v5M5.500 7.500h5M5.500 9.500h5" /></g></G>银期转帐</SideItem></li>
                </SideMenu>

                <OrderPane>
                  <OrderForm onSubmit={(e) => e.preventDefault()}>
                    <FormTop><i /><i /><i /><i /></FormTop>
                    <FormRow>
                      <Field aria-label="合约" readOnly value="沥青加权" />
                      <label htmlFor="qty">数量</label>
                      <Field id="qty" $bold defaultValue="1" />
                      <Spin />
                    </FormRow>
                    <FormRow>
                      <PriceKind>
                        <select aria-label="价格类型" defaultValue="limit"><option value="limit">1.限价</option></select>
                        <G w={10} h={8} sw={2}><path d="M1 1.500l4 4 4-4" stroke="#555" /></G>
                      </PriceKind>
                      <label htmlFor="price">价格</label>
                      <Field id="price" $bold defaultValue="对手价" />
                      <Spin />
                    </FormRow>
                    <LimitRow><span>涨停:3890 跌停:3520</span><button type="button">查询</button></LimitRow>
                    <TradeRow>
                      <Checks>
                        {['确认', '保值', '预埋'].map((t) => <label key={t}><input type="checkbox" />{t}</label>)}
                      </Checks>
                      <TradeButton type="button" $tone="#f0323c">买入</TradeButton>
                      <TradeButton type="button" $tone="#2c9638">卖出</TradeButton>
                    </TradeRow>
                  </OrderForm>
                  <Sheets names={['普通下单', '闪电下单', '三键下单']} active={0} />
                </OrderPane>

                <Splitter aria-label="收起"><Chevron /></Splitter>

                <ListPane $share={608}>
                  <ListBody>
                    <TableClip>
                      <Grid
                        headHeight={19}
                        heads={['序', '品种', '均价', '今持', '总持', '市价', '浮动盈亏']}
                        widths={[31, 162, 90, 72, 72, 91, undefined]}
                        rows={positions}
                        tone={(r) => (r[6].startsWith('-') ? '#1e9130' : '#e62430')}
                      />
                    </TableClip>
                    <Scroll before={0} thumb={338} after={229} />
                  </ListBody>
                  <AccountTabs><button>18151095507</button><div /></AccountTabs>
                </ListPane>

                <Gutter />

                <ListPane $share={406}>
                  <ListBody $framed>
                    <TableClip>
                      <Grid
                        flushFirst
                        headHeight={21}
                        heads={['', '品种', '类型', '方向', '价格']}
                        widths={[117, 114, 54, 49, undefined]}
                        rows={fills}
                        tone={() => '#2a2a2a'}
                      />
                    </TableClip>
                    <Scroll before={45} thumb={149} after={166} />
                  </ListBody>
                  <Sheets names={['未成交...', '成交明细', '委托记录', '品种列表', '下单队列']} active={1} />
                </ListPane>
              </Workspace>

              <AccountBar>
                <div><dt>账户栏</dt><dd>[242047]</dd></div>
                {account.map(([k, v]) => <div key={k}><dt>{k}</dt><dd>{v}</dd></div>)}
              </AccountBar>
            </Centre>

            <PeriodRail>
              <PeriodButton aria-label="分时"><G w={18} h={18}><path d="M2 11l4-4 3 3 7-7M2 15.500h14" /></G></PeriodButton>
              <PeriodButton>Bn</PeriodButton>
              <PeriodButton aria-label="走势"><G w={16} h={16}><path d="M1.500 1.500h13v13h-13zM4 8.500l2.500-2.500L9 8.500 12 6" /></G></PeriodButton>
              {['Sn', '1', 'Mn', '3', '5', '10', '15', '30', '时', 'Hn', '日', 'Dn', '周', '月', '季'].map((t) => (
                <PeriodButton key={t} $on={t === '日'}>{t}</PeriodButton>
              ))}
              <RailMore>
                <svg width="4" height="6" viewBox="0 0 4 6"><path d="M4 0v6L0 3z" /></svg>
                <G w={8} h={10}><path d="M1.500 1L4 3.500 6.500 1M1.500 6L4 8.500 6.500 6" stroke="#111" /></G>
              </RailMore>
            </PeriodRail>
          </WorkArea>

          <MarketRow>
            {markets.map(([t, menu]) => <Market key={t} $menu={menu}>{t}{menu && <Caret />}</Market>)}
            <Market aria-label="市场设置"><MarketGear><Gear size={18} /></MarketGear></Market>
            <MarketMore>
              <G w={10} h={8}><path d="M1 1l3 3-3 3M6 1l3 3-3 3" stroke="#111" /></G>
              <Caret />
            </MarketMore>
          </MarketRow>

          <StatusRow>
            <Quote><b>3)</b><span>335亿</span></Quote>
            <StrengthBar w={95} up={49} dots="gggrgrgg" />
            <Quote><span>深</span><b>12830</b><b>-1.46%</b><b>(-190.20)</b><span>450亿</span></Quote>
            <StrengthBar w={90} up={50} dots="gggrgggg" />
            <Quote><span>300</span><b>4431.0</b><b>-1.46%</b><b>(-65.44)</b><span>181亿</span></Quote>
            <StrengthBar w={84} up={50} dots="ggggrrgg" />
            <StatusTray>
              <TrayCell $w={99}>
                <G w={14} h={14} sw={1.2}><g stroke="#b050a8"><circle cx="7" cy="7" r="6" /><path d="M4 10l6-6M4 6l2-2M8 10l2-2" /></g></G>
                <span>即时行情...</span>
              </TrayCell>
              <TrayCell $w={31} aria-label="Python"><FaPython size={18} color="#111" /></TrayCell>
              <TrayCell $w={31} aria-label="数据库">
                <svg width="16" height="18" viewBox="0 0 16 18"><path d="M1 3v12a7 2.500 0 0 0 14 0V3z" fill="#8a0c12" /><ellipse cx="8" cy="3" rx="7" ry="2.500" fill="#f3dcdc" stroke="#8a0c12" /></svg>
              </TrayCell>
              <TrayCell $w={31} aria-label="行情连接">
                <svg width="18" height="18" viewBox="0 0 18 18"><path d="M2 4c0 8 5 13 10 12 5-2 6-9 3-13z" fill="#58b4cc" stroke="#1f5068" /><ellipse cx="9" cy="7.500" rx="7.500" ry="4.500" transform="rotate(-35 9 7.500)" fill="#c4e8f0" stroke="#1f5068" /><path d="M9 8L5 3M9 8l-6-1" stroke="#174a80" strokeWidth="1.500" /></svg>
              </TrayCell>
              <TrayCell $w={31} aria-label="提醒">
                <svg width="16" height="18" viewBox="0 0 16 18"><path d="M8 2C5 5 6 11 2 14h12C11 11 11 5 8 2z" fill="#ddd" stroke="#333" strokeWidth="1.200" /><path d="M6 16h4M8 1v1" stroke="#333" strokeWidth="1.500" /></svg>
              </TrayCell>
              <TrayCell $w={31} aria-label="消息">
                <svg width="18" height="14" viewBox="0 0 18 14"><path d="M1 6l7-5 9 5-1 4-7 3z" fill="#e8d84c" stroke="#54501c" /><path d="M2 7l6 1 3-5M8 8l1 4" fill="none" stroke="#54501c" /></svg>
              </TrayCell>
              <TrayCell $w={31} $bg="#86f07c" aria-label="服务器">
                <svg width="16" height="18" viewBox="0 0 16 18"><path d="M1 3l3-2h11v14l-3 2H1z" fill="#8d958d" stroke="#4a504a" /><path d="M12 3v14M1 9h11M5 6h3M5 12h3" stroke="#3c423c" /></svg>
              </TrayCell>
              <TrayCell $w={71} $bg="#f0f0f0">09:33:13</TrayCell>
            </StatusTray>
          </StatusRow>

          <TaskBar>
            <Task $w={66} aria-label="开始">
              <svg width="24" height="26" viewBox="0 0 24 26" fill="#fff"><path d="M0 4l10-1.500V12H0zM11.500 2.200L24 .5V12H11.500zM0 13.500h10V23L0 21.500zM11.500 13.500H24V25l-12.500-1.700z" /></svg>
            </Task>
            <Task $w={76} aria-label="服务器管理器">
              <svg width="30" height="32" viewBox="0 0 30 32"><path d="M2 2h12v26H2z" fill="#1f74c0" stroke="#cfeaf6" /><path d="M2 8h12M5 12h6" stroke="#cfeaf6" strokeWidth="1.500" /><rect x="7" y="18" width="21" height="12" fill="#7c8792" stroke="#eef4f7" strokeWidth="1.500" /><path d="M13 18v-3h9v3M11 24h13m-3-2l3 2-3 2m-7-4l-3 2 3 2" fill="none" stroke="#eef4f7" strokeWidth="1.300" /></svg>
            </Task>
            <Task $w={74} aria-label="PowerShell">
              <svg width="28" height="26" viewBox="0 0 28 26"><path d="M6 2h21l-5 22H1z" fill="#2f78b8" stroke="#9ccbe6" /><path d="M9 6l7 7-9 6M15 19h6" fill="none" stroke="#fff" strokeWidth="2.400" /></svg>
            </Task>
            <Task $w={76} aria-label="文件资源管理器">
              <svg width="30" height="32" viewBox="0 0 30 32"><path d="M1 6h10l2-3h14v20H1z" fill="#e9c766" stroke="#c79a3a" /><path d="M5 4h6v5H5z" fill="#5fae50" /><path d="M13 2h4v5h-4z" fill="#d8453c" /><path d="M19 4h6v5h-6z" fill="#4f93d8" /><path d="M1 9h27v16H1z" fill="#f7e08e" /><path d="M5 30V19h20v11h-5v-5H10v5z" fill="#9fd3ee" stroke="#4f93b8" /></svg>
            </Task>
            <Task $w={71} $on aria-label="金字塔"><Logo size={29} /></Task>
            <Tray>
              <svg width="14" height="8" viewBox="0 0 14 8"><path d="M0 8h14L7 0z" fill="#12354b" /></svg>
              <TrayIcons>
                <svg width="30" height="30" viewBox="0 0 30 30"><path d="M3 2v26" stroke="#3f6f85" strokeWidth="4" /><path d="M3 2v26" stroke="#fff" strokeWidth="2" /><path d="M4 4c6-3 9 4 22 3l-3 4 2 5c-8 3-13-3-21 0z" fill="#fff" stroke="#3f6f85" /><ErrorBadge /></svg>
                <svg width="30" height="30" viewBox="0 0 30 30" fill="none"><path d="M10 5h18v14H10zM19 19v5M13 25h13M3 3h5v6H3zM5.500 9v16h6" stroke="#3f6f85" strokeWidth="4" /><path d="M10 5h18v14H10zM19 19v5M13 25h13M3 3h5v6H3zM5.500 9v16h6" stroke="#fff" strokeWidth="2" /></svg>
                <svg width="30" height="30" viewBox="0 0 30 30"><path d="M2 10h5l8-8v25l-8-8H2z" fill="#fff" stroke="#3f6f85" /><path d="M18 9c2 3 2 6 0 9" fill="none" stroke="#fff" strokeWidth="2" /><ErrorBadge /></svg>
              </TrayIcons>
              <TrayText $w={74}>ENG</TrayText>
              <TrayText $w={86}>9:33</TrayText>
            </Tray>
          </TaskBar>

          <MiniWindow>
            <MiniIcon><svg width="15" height="14" viewBox="0 0 15 14"><rect x=".5" y=".5" width="14" height="13" fill="#f4f8fa" stroke="#8fa0a8" /><path d="M2 4h5v8H2z" fill="#3a8f80" /><path d="M9 4h4v8H9z" fill="#cfe3ea" /></svg></MiniIcon>
            <MiniTitle>远...</MiniTitle>
            <MiniButton $w={33} aria-label="还原"><svg width="18" height="16" viewBox="0 0 18 16" fill="none" stroke="#111" strokeWidth="2.500"><path d="M2 5.500h10V14H2zM5 5V2h11v8h-3" /></svg></MiniButton>
            <MiniButton $w={32} aria-label="最大化"><svg width="18" height="14" viewBox="0 0 18 14" fill="none" stroke="#111" strokeWidth="3"><path d="M2 2h14v10H2z" /></svg></MiniButton>
            <MiniButton $w={55} aria-label="关闭"><svg width="14" height="14" viewBox="0 0 14 14" fill="none" stroke="#111" strokeWidth="2.600"><path d="M1.500 1L12.500 13M12.500 1L1.500 13" /></svg></MiniButton>
          </MiniWindow>

          <PhoneOverlay>
            <OverlayHalf aria-label="菜单"><Burger><i /><i /><i /></Burger></OverlayHalf>
            <OverlayHalf aria-label="键盘">
              <svg width="50" height="31" viewBox="0 0 50 31" fill="none" stroke="#444" strokeWidth="1.200">
                <rect width="50" height="31" rx="5" fill="#fff" stroke="none" />
                <path d="M5.500 5.500h40v20h-40zM5.500 12h40M5.500 18.500h40M12 5.500V12M18.500 5.500V12M25 5.500V12M31.500 5.500V12M38 5.500V12M15 12v6.500M21 12v6.500M27 12v6.500M33 12v6.500M39 12v6.500M12 18.500v7M35 18.500v7M40 18.500v7" />
              </svg>
            </OverlayHalf>
          </PhoneOverlay>

          <Pointer width="16" height="25" viewBox="0 0 16 25">
            <path d="M1.500 1.500v18l4-3.500 3.500 7.500 3.500-1.500L9 14.500h5.500z" fill="#fff" stroke="#333" />
          </Pointer>
        </Desktop>
      </Screen>
    </>
  );
}
